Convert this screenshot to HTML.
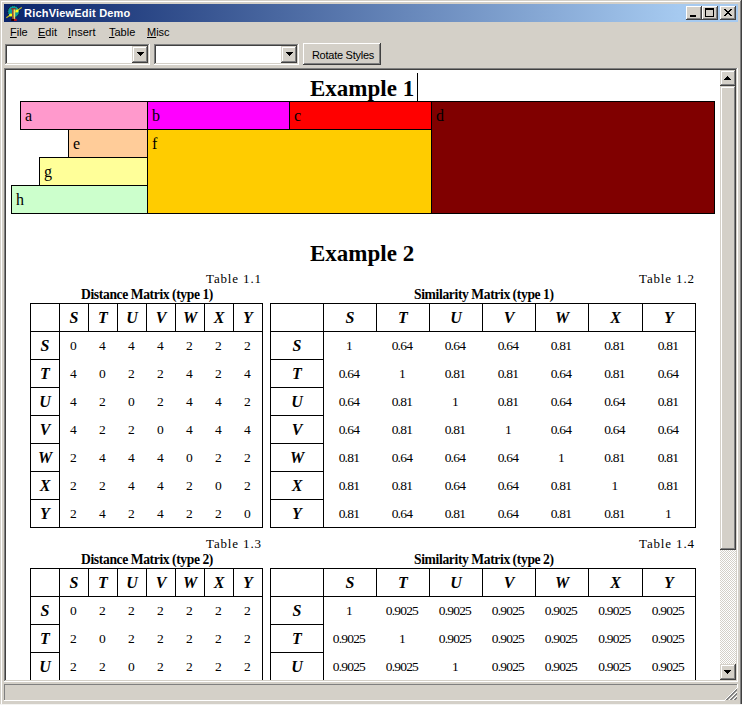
<!DOCTYPE html>
<html><head><meta charset="utf-8"><style>
html,body{margin:0;padding:0;}
body{width:742px;height:705px;position:relative;overflow:hidden;background:#d4d0c8;}
div{position:absolute;}
.t{white-space:nowrap;}
</style></head><body>
<div style="left:0px;top:0px;width:742px;height:1px;background:#d4d0c8"></div>
<div style="left:0px;top:0px;width:1px;height:705px;background:#d4d0c8"></div>
<div style="left:1px;top:1px;width:740px;height:1px;background:#ffffff"></div>
<div style="left:1px;top:1px;width:1px;height:703px;background:#ffffff"></div>
<div style="left:740px;top:1px;width:1px;height:703px;background:#808080"></div>
<div style="left:741px;top:0px;width:1px;height:704px;background:#404040"></div>
<div style="left:0px;top:704px;width:742px;height:1px;background:#f4f4f2"></div>
<div style="left:4px;top:4px;width:734px;height:18px;background:linear-gradient(to right,#0a246a 0%,#a6caf0 92%)"></div>
<div class="t" style="left:24px;top:6px;color:#fff;font:bold 11px/14px 'Liberation Sans',sans-serif;letter-spacing:0.2px">RichViewEdit Demo</div>
<svg style="position:absolute;left:6px;top:5px" width="16" height="16" viewBox="0 0 16 16">
<circle cx="7.6" cy="6.6" r="5.8" fill="#0c9c9c" stroke="#101010" stroke-width="0.9" stroke-dasharray="1.2 0.8"/>
<path d="M0.3 12.8 L15.8 2.4" stroke="#c8c028" stroke-width="1.15"/>
<circle cx="4.6" cy="9.9" r="1.5" fill="#ffff10"/>
<circle cx="11" cy="5.9" r="1.5" fill="#ffff10"/>
<rect x="6" y="4" width="1.7" height="10.5" fill="#9a4a30"/>
<rect x="7.7" y="4" width="1.5" height="10.5" fill="#f0e060"/>
<rect x="5.2" y="3.2" width="4.6" height="1.2" fill="#8a2a1a"/>
<rect x="5.2" y="13.9" width="2.8" height="2" fill="#200000"/>
<rect x="8" y="13.9" width="2.8" height="2" fill="#c01010"/>
</svg>
<div style="left:686px;top:6px;width:16px;height:14px;background:#404040"></div>
<div style="left:686px;top:6px;width:15px;height:13px;background:#ffffff"></div>
<div style="left:687px;top:7px;width:14px;height:12px;background:#808080"></div>
<div style="left:687px;top:7px;width:13px;height:11px;background:#d4d0c8"></div>
<div style="left:702px;top:6px;width:16px;height:14px;background:#404040"></div>
<div style="left:702px;top:6px;width:15px;height:13px;background:#ffffff"></div>
<div style="left:703px;top:7px;width:14px;height:12px;background:#808080"></div>
<div style="left:703px;top:7px;width:13px;height:11px;background:#d4d0c8"></div>
<div style="left:720px;top:6px;width:16px;height:14px;background:#404040"></div>
<div style="left:720px;top:6px;width:15px;height:13px;background:#ffffff"></div>
<div style="left:721px;top:7px;width:14px;height:12px;background:#808080"></div>
<div style="left:721px;top:7px;width:13px;height:11px;background:#d4d0c8"></div>
<div style="left:690px;top:15px;width:6px;height:2px;background:#000"></div>
<div style="left:705px;top:8px;width:9px;height:9px;background:#000"></div>
<div style="left:706px;top:10px;width:7px;height:6px;background:#d4d0c8"></div>
<svg style="position:absolute;left:724px;top:9px" width="8" height="7" shape-rendering="crispEdges">
<path d="M0 0h2v1h-2zM6 0h2v1h-2zM1 1h2v1h-2zM5 1h2v1h-2zM2 2h4v1h-4zM3 3h2v1h-2zM2 4h4v1h-4zM1 5h2v1h-2zM5 5h2v1h-2zM0 6h2v1h-2zM6 6h2v1h-2z" fill="#000"/>
</svg>
<div class="t" style="left:10px;top:26px;font:11px/13px 'Liberation Sans',sans-serif;color:#000"><u>F</u>ile</div>
<div class="t" style="left:38px;top:26px;font:11px/13px 'Liberation Sans',sans-serif;color:#000"><u>E</u>dit</div>
<div class="t" style="left:68px;top:26px;font:11px/13px 'Liberation Sans',sans-serif;color:#000"><u>I</u>nsert</div>
<div class="t" style="left:109px;top:26px;font:11px/13px 'Liberation Sans',sans-serif;color:#000"><u>T</u>able</div>
<div class="t" style="left:147px;top:26px;font:11px/13px 'Liberation Sans',sans-serif;color:#000"><u>M</u>isc</div>
<div style="left:5px;top:44px;width:145px;height:21px;background:#ffffff"></div>
<div style="left:5px;top:44px;width:144px;height:20px;background:#808080"></div>
<div style="left:6px;top:45px;width:143px;height:19px;background:#d4d0c8"></div>
<div style="left:6px;top:45px;width:142px;height:18px;background:#404040"></div>
<div style="left:7px;top:46px;width:141px;height:17px;background:#fff"></div>
<div style="left:132px;top:46px;width:16px;height:17px;background:#404040"></div>
<div style="left:132px;top:46px;width:15px;height:16px;background:#d4d0c8"></div>
<div style="left:133px;top:47px;width:14px;height:15px;background:#808080"></div>
<div style="left:133px;top:47px;width:13px;height:14px;background:#ffffff"></div>
<div style="left:134px;top:48px;width:12px;height:13px;background:#d4d0c8"></div>
<div style="left:137px;top:52px;width:7px;height:1px;background:#000"></div>
<div style="left:138px;top:53px;width:5px;height:1px;background:#000"></div>
<div style="left:139px;top:54px;width:3px;height:1px;background:#000"></div>
<div style="left:140px;top:55px;width:1px;height:1px;background:#000"></div>
<div style="left:154px;top:44px;width:145px;height:21px;background:#ffffff"></div>
<div style="left:154px;top:44px;width:144px;height:20px;background:#808080"></div>
<div style="left:155px;top:45px;width:143px;height:19px;background:#d4d0c8"></div>
<div style="left:155px;top:45px;width:142px;height:18px;background:#404040"></div>
<div style="left:156px;top:46px;width:141px;height:17px;background:#fff"></div>
<div style="left:281px;top:46px;width:16px;height:17px;background:#404040"></div>
<div style="left:281px;top:46px;width:15px;height:16px;background:#d4d0c8"></div>
<div style="left:282px;top:47px;width:14px;height:15px;background:#808080"></div>
<div style="left:282px;top:47px;width:13px;height:14px;background:#ffffff"></div>
<div style="left:283px;top:48px;width:12px;height:13px;background:#d4d0c8"></div>
<div style="left:286px;top:52px;width:7px;height:1px;background:#000"></div>
<div style="left:287px;top:53px;width:5px;height:1px;background:#000"></div>
<div style="left:288px;top:54px;width:3px;height:1px;background:#000"></div>
<div style="left:289px;top:55px;width:1px;height:1px;background:#000"></div>
<div style="left:303px;top:43px;width:78px;height:22px;background:#404040"></div>
<div style="left:303px;top:43px;width:77px;height:21px;background:#ffffff"></div>
<div style="left:304px;top:44px;width:76px;height:20px;background:#808080"></div>
<div style="left:304px;top:44px;width:75px;height:19px;background:#d4d0c8"></div>
<div class="t" style="left:304px;top:49px;width:78px;text-align:center;font:11px/13px 'Liberation Sans',sans-serif;letter-spacing:-0.25px;color:#000">Rotate Styles</div>
<div style="left:4px;top:68px;width:734px;height:614px;background:#ffffff"></div>
<div style="left:4px;top:68px;width:733px;height:613px;background:#808080"></div>
<div style="left:5px;top:69px;width:732px;height:612px;background:#d4d0c8"></div>
<div style="left:5px;top:69px;width:731px;height:611px;background:#404040"></div>
<div style="left:6px;top:70px;width:730px;height:610px;background:#fff"></div>
<svg style="position:absolute;left:720px;top:86px" width="16" height="578" shape-rendering="crispEdges"><defs><pattern id="chk" width="2" height="2" patternUnits="userSpaceOnUse"><rect width="2" height="2" fill="#fff"/><rect width="1" height="1" fill="#d4d0c8"/><rect x="1" y="1" width="1" height="1" fill="#d4d0c8"/></pattern></defs><rect width="16" height="578" fill="url(#chk)"/></svg>
<div style="left:720px;top:70px;width:16px;height:16px;background:#404040"></div>
<div style="left:720px;top:70px;width:15px;height:15px;background:#d4d0c8"></div>
<div style="left:721px;top:71px;width:14px;height:14px;background:#808080"></div>
<div style="left:721px;top:71px;width:13px;height:13px;background:#ffffff"></div>
<div style="left:722px;top:72px;width:12px;height:12px;background:#d4d0c8"></div>
<div style="left:727px;top:76px;width:1px;height:1px;background:#000"></div>
<div style="left:726px;top:77px;width:3px;height:1px;background:#000"></div>
<div style="left:725px;top:78px;width:5px;height:1px;background:#000"></div>
<div style="left:724px;top:79px;width:7px;height:1px;background:#000"></div>
<div style="left:720px;top:86px;width:16px;height:464px;background:#404040"></div>
<div style="left:720px;top:86px;width:15px;height:463px;background:#d4d0c8"></div>
<div style="left:721px;top:87px;width:14px;height:462px;background:#808080"></div>
<div style="left:721px;top:87px;width:13px;height:461px;background:#ffffff"></div>
<div style="left:722px;top:88px;width:12px;height:460px;background:#d4d0c8"></div>
<div style="left:720px;top:664px;width:16px;height:16px;background:#404040"></div>
<div style="left:720px;top:664px;width:15px;height:15px;background:#d4d0c8"></div>
<div style="left:721px;top:665px;width:14px;height:14px;background:#808080"></div>
<div style="left:721px;top:665px;width:13px;height:13px;background:#ffffff"></div>
<div style="left:722px;top:666px;width:12px;height:12px;background:#d4d0c8"></div>
<div style="left:724px;top:670px;width:7px;height:1px;background:#000"></div>
<div style="left:725px;top:671px;width:5px;height:1px;background:#000"></div>
<div style="left:726px;top:672px;width:3px;height:1px;background:#000"></div>
<div style="left:727px;top:673px;width:1px;height:1px;background:#000"></div>
<div style="left:0;top:0;width:742px;height:705px;clip-path:inset(69px 22px 25px 6px)"><div class="t" style="left:310px;top:76px;font:bold 23px/26px 'Liberation Serif',serif;color:#000">Example 1</div><div style="left:417px;top:73px;width:1px;height:28px;background:#000"></div><div style="left:20px;top:101px;width:128px;height:29px;background:#000"></div><div style="left:21px;top:102px;width:126px;height:27px;background:#ff99cc"></div><div class="t" style="left:25px;top:107px;font:16px/18px 'Liberation Serif',serif;color:#000">a</div><div style="left:147px;top:101px;width:143px;height:29px;background:#000"></div><div style="left:148px;top:102px;width:141px;height:27px;background:#ff00ff"></div><div class="t" style="left:152px;top:107px;font:16px/18px 'Liberation Serif',serif;color:#000">b</div><div style="left:289px;top:101px;width:143px;height:29px;background:#000"></div><div style="left:290px;top:102px;width:141px;height:27px;background:#ff0000"></div><div class="t" style="left:294px;top:107px;font:16px/18px 'Liberation Serif',serif;color:#000">c</div><div style="left:431px;top:101px;width:284px;height:113px;background:#000"></div><div style="left:432px;top:102px;width:282px;height:111px;background:#800000"></div><div class="t" style="left:436px;top:107px;font:16px/18px 'Liberation Serif',serif;color:#000">d</div><div style="left:68px;top:129px;width:80px;height:29px;background:#000"></div><div style="left:69px;top:130px;width:78px;height:27px;background:#ffcc99"></div><div class="t" style="left:73px;top:135px;font:16px/18px 'Liberation Serif',serif;color:#000">e</div><div style="left:147px;top:129px;width:285px;height:85px;background:#000"></div><div style="left:148px;top:130px;width:283px;height:83px;background:#ffcc00"></div><div class="t" style="left:152px;top:135px;font:16px/18px 'Liberation Serif',serif;color:#000">f</div><div style="left:39px;top:157px;width:109px;height:29px;background:#000"></div><div style="left:40px;top:158px;width:107px;height:27px;background:#ffff99"></div><div class="t" style="left:44px;top:163px;font:16px/18px 'Liberation Serif',serif;color:#000">g</div><div style="left:11px;top:185px;width:137px;height:29px;background:#000"></div><div style="left:12px;top:186px;width:135px;height:27px;background:#ccffcc"></div><div class="t" style="left:16px;top:191px;font:16px/18px 'Liberation Serif',serif;color:#000">h</div><div class="t" style="left:310px;top:241px;font:bold 23px/26px 'Liberation Serif',serif;color:#000">Example 2</div><div class="t" style="left:206px;top:271px;font:13px/15px 'Liberation Serif',serif;letter-spacing:0.85px;color:#000">Table 1.1</div><div class="t" style="left:81px;top:287px;font:bold 13.6px/15px 'Liberation Serif',serif;letter-spacing:-0.36px;word-spacing:-0.3px;color:#000">Distance Matrix (type 1)</div><div style="left:30px;top:303px;width:233px;height:1px;background:#000"></div><div style="left:30px;top:527px;width:233px;height:1px;background:#000"></div><div style="left:30px;top:303px;width:1px;height:225px;background:#000"></div><div style="left:262px;top:303px;width:1px;height:225px;background:#000"></div><div style="left:59px;top:303px;width:1px;height:225px;background:#000"></div><div style="left:30px;top:331px;width:233px;height:1px;background:#000"></div><div style="left:88px;top:303px;width:1px;height:28px;background:#000"></div><div style="left:117px;top:303px;width:1px;height:28px;background:#000"></div><div style="left:146px;top:303px;width:1px;height:28px;background:#000"></div><div style="left:175px;top:303px;width:1px;height:28px;background:#000"></div><div style="left:204px;top:303px;width:1px;height:28px;background:#000"></div><div style="left:233px;top:303px;width:1px;height:28px;background:#000"></div><div style="left:30px;top:359px;width:29px;height:1px;background:#000"></div><div style="left:30px;top:387px;width:29px;height:1px;background:#000"></div><div style="left:30px;top:415px;width:29px;height:1px;background:#000"></div><div style="left:30px;top:443px;width:29px;height:1px;background:#000"></div><div style="left:30px;top:471px;width:29px;height:1px;background:#000"></div><div style="left:30px;top:499px;width:29px;height:1px;background:#000"></div><div class="t" style="left:-26.0px;top:309px;width:200px;text-align:center;font:bold italic 16px/18px 'Liberation Serif',serif;color:#000">S</div><div class="t" style="left:-55.0px;top:337px;width:200px;text-align:center;font:bold italic 16px/18px 'Liberation Serif',serif;color:#000">S</div><div class="t" style="left:3.0px;top:309px;width:200px;text-align:center;font:bold italic 16px/18px 'Liberation Serif',serif;color:#000">T</div><div class="t" style="left:-55.0px;top:365px;width:200px;text-align:center;font:bold italic 16px/18px 'Liberation Serif',serif;color:#000">T</div><div class="t" style="left:32.0px;top:309px;width:200px;text-align:center;font:bold italic 16px/18px 'Liberation Serif',serif;color:#000">U</div><div class="t" style="left:-55.0px;top:393px;width:200px;text-align:center;font:bold italic 16px/18px 'Liberation Serif',serif;color:#000">U</div><div class="t" style="left:61.0px;top:309px;width:200px;text-align:center;font:bold italic 16px/18px 'Liberation Serif',serif;color:#000">V</div><div class="t" style="left:-55.0px;top:421px;width:200px;text-align:center;font:bold italic 16px/18px 'Liberation Serif',serif;color:#000">V</div><div class="t" style="left:90.0px;top:309px;width:200px;text-align:center;font:bold italic 16px/18px 'Liberation Serif',serif;color:#000">W</div><div class="t" style="left:-55.0px;top:449px;width:200px;text-align:center;font:bold italic 16px/18px 'Liberation Serif',serif;color:#000">W</div><div class="t" style="left:119.0px;top:309px;width:200px;text-align:center;font:bold italic 16px/18px 'Liberation Serif',serif;color:#000">X</div><div class="t" style="left:-55.0px;top:477px;width:200px;text-align:center;font:bold italic 16px/18px 'Liberation Serif',serif;color:#000">X</div><div class="t" style="left:148.0px;top:309px;width:200px;text-align:center;font:bold italic 16px/18px 'Liberation Serif',serif;color:#000">Y</div><div class="t" style="left:-55.0px;top:505px;width:200px;text-align:center;font:bold italic 16px/18px 'Liberation Serif',serif;color:#000">Y</div><div class="t" style="left:-27.099999999999994px;top:338px;width:200px;text-align:center;font:13.5px/15px 'Liberation Serif',serif;letter-spacing:-0.8px;color:#000">0</div><div class="t" style="left:1.9000000000000057px;top:338px;width:200px;text-align:center;font:13.5px/15px 'Liberation Serif',serif;letter-spacing:-0.8px;color:#000">4</div><div class="t" style="left:30.900000000000006px;top:338px;width:200px;text-align:center;font:13.5px/15px 'Liberation Serif',serif;letter-spacing:-0.8px;color:#000">4</div><div class="t" style="left:59.900000000000006px;top:338px;width:200px;text-align:center;font:13.5px/15px 'Liberation Serif',serif;letter-spacing:-0.8px;color:#000">4</div><div class="t" style="left:88.9px;top:338px;width:200px;text-align:center;font:13.5px/15px 'Liberation Serif',serif;letter-spacing:-0.8px;color:#000">2</div><div class="t" style="left:117.9px;top:338px;width:200px;text-align:center;font:13.5px/15px 'Liberation Serif',serif;letter-spacing:-0.8px;color:#000">2</div><div class="t" style="left:146.9px;top:338px;width:200px;text-align:center;font:13.5px/15px 'Liberation Serif',serif;letter-spacing:-0.8px;color:#000">2</div><div class="t" style="left:-27.099999999999994px;top:366px;width:200px;text-align:center;font:13.5px/15px 'Liberation Serif',serif;letter-spacing:-0.8px;color:#000">4</div><div class="t" style="left:1.9000000000000057px;top:366px;width:200px;text-align:center;font:13.5px/15px 'Liberation Serif',serif;letter-spacing:-0.8px;color:#000">0</div><div class="t" style="left:30.900000000000006px;top:366px;width:200px;text-align:center;font:13.5px/15px 'Liberation Serif',serif;letter-spacing:-0.8px;color:#000">2</div><div class="t" style="left:59.900000000000006px;top:366px;width:200px;text-align:center;font:13.5px/15px 'Liberation Serif',serif;letter-spacing:-0.8px;color:#000">2</div><div class="t" style="left:88.9px;top:366px;width:200px;text-align:center;font:13.5px/15px 'Liberation Serif',serif;letter-spacing:-0.8px;color:#000">4</div><div class="t" style="left:117.9px;top:366px;width:200px;text-align:center;font:13.5px/15px 'Liberation Serif',serif;letter-spacing:-0.8px;color:#000">2</div><div class="t" style="left:146.9px;top:366px;width:200px;text-align:center;font:13.5px/15px 'Liberation Serif',serif;letter-spacing:-0.8px;color:#000">4</div><div class="t" style="left:-27.099999999999994px;top:394px;width:200px;text-align:center;font:13.5px/15px 'Liberation Serif',serif;letter-spacing:-0.8px;color:#000">4</div><div class="t" style="left:1.9000000000000057px;top:394px;width:200px;text-align:center;font:13.5px/15px 'Liberation Serif',serif;letter-spacing:-0.8px;color:#000">2</div><div class="t" style="left:30.900000000000006px;top:394px;width:200px;text-align:center;font:13.5px/15px 'Liberation Serif',serif;letter-spacing:-0.8px;color:#000">0</div><div class="t" style="left:59.900000000000006px;top:394px;width:200px;text-align:center;font:13.5px/15px 'Liberation Serif',serif;letter-spacing:-0.8px;color:#000">2</div><div class="t" style="left:88.9px;top:394px;width:200px;text-align:center;font:13.5px/15px 'Liberation Serif',serif;letter-spacing:-0.8px;color:#000">4</div><div class="t" style="left:117.9px;top:394px;width:200px;text-align:center;font:13.5px/15px 'Liberation Serif',serif;letter-spacing:-0.8px;color:#000">4</div><div class="t" style="left:146.9px;top:394px;width:200px;text-align:center;font:13.5px/15px 'Liberation Serif',serif;letter-spacing:-0.8px;color:#000">2</div><div class="t" style="left:-27.099999999999994px;top:422px;width:200px;text-align:center;font:13.5px/15px 'Liberation Serif',serif;letter-spacing:-0.8px;color:#000">4</div><div class="t" style="left:1.9000000000000057px;top:422px;width:200px;text-align:center;font:13.5px/15px 'Liberation Serif',serif;letter-spacing:-0.8px;color:#000">2</div><div class="t" style="left:30.900000000000006px;top:422px;width:200px;text-align:center;font:13.5px/15px 'Liberation Serif',serif;letter-spacing:-0.8px;color:#000">2</div><div class="t" style="left:59.900000000000006px;top:422px;width:200px;text-align:center;font:13.5px/15px 'Liberation Serif',serif;letter-spacing:-0.8px;color:#000">0</div><div class="t" style="left:88.9px;top:422px;width:200px;text-align:center;font:13.5px/15px 'Liberation Serif',serif;letter-spacing:-0.8px;color:#000">4</div><div class="t" style="left:117.9px;top:422px;width:200px;text-align:center;font:13.5px/15px 'Liberation Serif',serif;letter-spacing:-0.8px;color:#000">4</div><div class="t" style="left:146.9px;top:422px;width:200px;text-align:center;font:13.5px/15px 'Liberation Serif',serif;letter-spacing:-0.8px;color:#000">4</div><div class="t" style="left:-27.099999999999994px;top:450px;width:200px;text-align:center;font:13.5px/15px 'Liberation Serif',serif;letter-spacing:-0.8px;color:#000">2</div><div class="t" style="left:1.9000000000000057px;top:450px;width:200px;text-align:center;font:13.5px/15px 'Liberation Serif',serif;letter-spacing:-0.8px;color:#000">4</div><div class="t" style="left:30.900000000000006px;top:450px;width:200px;text-align:center;font:13.5px/15px 'Liberation Serif',serif;letter-spacing:-0.8px;color:#000">4</div><div class="t" style="left:59.900000000000006px;top:450px;width:200px;text-align:center;font:13.5px/15px 'Liberation Serif',serif;letter-spacing:-0.8px;color:#000">4</div><div class="t" style="left:88.9px;top:450px;width:200px;text-align:center;font:13.5px/15px 'Liberation Serif',serif;letter-spacing:-0.8px;color:#000">0</div><div class="t" style="left:117.9px;top:450px;width:200px;text-align:center;font:13.5px/15px 'Liberation Serif',serif;letter-spacing:-0.8px;color:#000">2</div><div class="t" style="left:146.9px;top:450px;width:200px;text-align:center;font:13.5px/15px 'Liberation Serif',serif;letter-spacing:-0.8px;color:#000">2</div><div class="t" style="left:-27.099999999999994px;top:478px;width:200px;text-align:center;font:13.5px/15px 'Liberation Serif',serif;letter-spacing:-0.8px;color:#000">2</div><div class="t" style="left:1.9000000000000057px;top:478px;width:200px;text-align:center;font:13.5px/15px 'Liberation Serif',serif;letter-spacing:-0.8px;color:#000">2</div><div class="t" style="left:30.900000000000006px;top:478px;width:200px;text-align:center;font:13.5px/15px 'Liberation Serif',serif;letter-spacing:-0.8px;color:#000">4</div><div class="t" style="left:59.900000000000006px;top:478px;width:200px;text-align:center;font:13.5px/15px 'Liberation Serif',serif;letter-spacing:-0.8px;color:#000">4</div><div class="t" style="left:88.9px;top:478px;width:200px;text-align:center;font:13.5px/15px 'Liberation Serif',serif;letter-spacing:-0.8px;color:#000">2</div><div class="t" style="left:117.9px;top:478px;width:200px;text-align:center;font:13.5px/15px 'Liberation Serif',serif;letter-spacing:-0.8px;color:#000">0</div><div class="t" style="left:146.9px;top:478px;width:200px;text-align:center;font:13.5px/15px 'Liberation Serif',serif;letter-spacing:-0.8px;color:#000">2</div><div class="t" style="left:-27.099999999999994px;top:506px;width:200px;text-align:center;font:13.5px/15px 'Liberation Serif',serif;letter-spacing:-0.8px;color:#000">2</div><div class="t" style="left:1.9000000000000057px;top:506px;width:200px;text-align:center;font:13.5px/15px 'Liberation Serif',serif;letter-spacing:-0.8px;color:#000">4</div><div class="t" style="left:30.900000000000006px;top:506px;width:200px;text-align:center;font:13.5px/15px 'Liberation Serif',serif;letter-spacing:-0.8px;color:#000">2</div><div class="t" style="left:59.900000000000006px;top:506px;width:200px;text-align:center;font:13.5px/15px 'Liberation Serif',serif;letter-spacing:-0.8px;color:#000">4</div><div class="t" style="left:88.9px;top:506px;width:200px;text-align:center;font:13.5px/15px 'Liberation Serif',serif;letter-spacing:-0.8px;color:#000">2</div><div class="t" style="left:117.9px;top:506px;width:200px;text-align:center;font:13.5px/15px 'Liberation Serif',serif;letter-spacing:-0.8px;color:#000">2</div><div class="t" style="left:146.9px;top:506px;width:200px;text-align:center;font:13.5px/15px 'Liberation Serif',serif;letter-spacing:-0.8px;color:#000">0</div><div class="t" style="left:639px;top:271px;font:13px/15px 'Liberation Serif',serif;letter-spacing:0.85px;color:#000">Table 1.2</div><div class="t" style="left:414px;top:287px;font:bold 13.6px/15px 'Liberation Serif',serif;letter-spacing:-0.36px;word-spacing:-0.3px;color:#000">Similarity Matrix (type 1)</div><div style="left:270px;top:303px;width:426px;height:1px;background:#000"></div><div style="left:270px;top:527px;width:426px;height:1px;background:#000"></div><div style="left:270px;top:303px;width:1px;height:225px;background:#000"></div><div style="left:695px;top:303px;width:1px;height:225px;background:#000"></div><div style="left:323px;top:303px;width:1px;height:225px;background:#000"></div><div style="left:270px;top:331px;width:426px;height:1px;background:#000"></div><div style="left:376px;top:303px;width:1px;height:28px;background:#000"></div><div style="left:429px;top:303px;width:1px;height:28px;background:#000"></div><div style="left:482px;top:303px;width:1px;height:28px;background:#000"></div><div style="left:535px;top:303px;width:1px;height:28px;background:#000"></div><div style="left:588px;top:303px;width:1px;height:28px;background:#000"></div><div style="left:642px;top:303px;width:1px;height:28px;background:#000"></div><div style="left:270px;top:359px;width:53px;height:1px;background:#000"></div><div style="left:270px;top:387px;width:53px;height:1px;background:#000"></div><div style="left:270px;top:415px;width:53px;height:1px;background:#000"></div><div style="left:270px;top:443px;width:53px;height:1px;background:#000"></div><div style="left:270px;top:471px;width:53px;height:1px;background:#000"></div><div style="left:270px;top:499px;width:53px;height:1px;background:#000"></div><div class="t" style="left:250.0px;top:309px;width:200px;text-align:center;font:bold italic 16px/18px 'Liberation Serif',serif;color:#000">S</div><div class="t" style="left:197.0px;top:337px;width:200px;text-align:center;font:bold italic 16px/18px 'Liberation Serif',serif;color:#000">S</div><div class="t" style="left:303.0px;top:309px;width:200px;text-align:center;font:bold italic 16px/18px 'Liberation Serif',serif;color:#000">T</div><div class="t" style="left:197.0px;top:365px;width:200px;text-align:center;font:bold italic 16px/18px 'Liberation Serif',serif;color:#000">T</div><div class="t" style="left:356.0px;top:309px;width:200px;text-align:center;font:bold italic 16px/18px 'Liberation Serif',serif;color:#000">U</div><div class="t" style="left:197.0px;top:393px;width:200px;text-align:center;font:bold italic 16px/18px 'Liberation Serif',serif;color:#000">U</div><div class="t" style="left:409.0px;top:309px;width:200px;text-align:center;font:bold italic 16px/18px 'Liberation Serif',serif;color:#000">V</div><div class="t" style="left:197.0px;top:421px;width:200px;text-align:center;font:bold italic 16px/18px 'Liberation Serif',serif;color:#000">V</div><div class="t" style="left:462.0px;top:309px;width:200px;text-align:center;font:bold italic 16px/18px 'Liberation Serif',serif;color:#000">W</div><div class="t" style="left:197.0px;top:449px;width:200px;text-align:center;font:bold italic 16px/18px 'Liberation Serif',serif;color:#000">W</div><div class="t" style="left:515.5px;top:309px;width:200px;text-align:center;font:bold italic 16px/18px 'Liberation Serif',serif;color:#000">X</div><div class="t" style="left:197.0px;top:477px;width:200px;text-align:center;font:bold italic 16px/18px 'Liberation Serif',serif;color:#000">X</div><div class="t" style="left:569.0px;top:309px;width:200px;text-align:center;font:bold italic 16px/18px 'Liberation Serif',serif;color:#000">Y</div><div class="t" style="left:197.0px;top:505px;width:200px;text-align:center;font:bold italic 16px/18px 'Liberation Serif',serif;color:#000">Y</div><div class="t" style="left:248.89999999999998px;top:338px;width:200px;text-align:center;font:13.5px/15px 'Liberation Serif',serif;letter-spacing:-0.8px;color:#000">1</div><div class="t" style="left:301.9px;top:338px;width:200px;text-align:center;font:13.5px/15px 'Liberation Serif',serif;letter-spacing:-0.8px;color:#000">0.64</div><div class="t" style="left:354.9px;top:338px;width:200px;text-align:center;font:13.5px/15px 'Liberation Serif',serif;letter-spacing:-0.8px;color:#000">0.64</div><div class="t" style="left:407.9px;top:338px;width:200px;text-align:center;font:13.5px/15px 'Liberation Serif',serif;letter-spacing:-0.8px;color:#000">0.64</div><div class="t" style="left:460.9px;top:338px;width:200px;text-align:center;font:13.5px/15px 'Liberation Serif',serif;letter-spacing:-0.8px;color:#000">0.81</div><div class="t" style="left:514.4px;top:338px;width:200px;text-align:center;font:13.5px/15px 'Liberation Serif',serif;letter-spacing:-0.8px;color:#000">0.81</div><div class="t" style="left:567.9px;top:338px;width:200px;text-align:center;font:13.5px/15px 'Liberation Serif',serif;letter-spacing:-0.8px;color:#000">0.81</div><div class="t" style="left:248.89999999999998px;top:366px;width:200px;text-align:center;font:13.5px/15px 'Liberation Serif',serif;letter-spacing:-0.8px;color:#000">0.64</div><div class="t" style="left:301.9px;top:366px;width:200px;text-align:center;font:13.5px/15px 'Liberation Serif',serif;letter-spacing:-0.8px;color:#000">1</div><div class="t" style="left:354.9px;top:366px;width:200px;text-align:center;font:13.5px/15px 'Liberation Serif',serif;letter-spacing:-0.8px;color:#000">0.81</div><div class="t" style="left:407.9px;top:366px;width:200px;text-align:center;font:13.5px/15px 'Liberation Serif',serif;letter-spacing:-0.8px;color:#000">0.81</div><div class="t" style="left:460.9px;top:366px;width:200px;text-align:center;font:13.5px/15px 'Liberation Serif',serif;letter-spacing:-0.8px;color:#000">0.64</div><div class="t" style="left:514.4px;top:366px;width:200px;text-align:center;font:13.5px/15px 'Liberation Serif',serif;letter-spacing:-0.8px;color:#000">0.81</div><div class="t" style="left:567.9px;top:366px;width:200px;text-align:center;font:13.5px/15px 'Liberation Serif',serif;letter-spacing:-0.8px;color:#000">0.64</div><div class="t" style="left:248.89999999999998px;top:394px;width:200px;text-align:center;font:13.5px/15px 'Liberation Serif',serif;letter-spacing:-0.8px;color:#000">0.64</div><div class="t" style="left:301.9px;top:394px;width:200px;text-align:center;font:13.5px/15px 'Liberation Serif',serif;letter-spacing:-0.8px;color:#000">0.81</div><div class="t" style="left:354.9px;top:394px;width:200px;text-align:center;font:13.5px/15px 'Liberation Serif',serif;letter-spacing:-0.8px;color:#000">1</div><div class="t" style="left:407.9px;top:394px;width:200px;text-align:center;font:13.5px/15px 'Liberation Serif',serif;letter-spacing:-0.8px;color:#000">0.81</div><div class="t" style="left:460.9px;top:394px;width:200px;text-align:center;font:13.5px/15px 'Liberation Serif',serif;letter-spacing:-0.8px;color:#000">0.64</div><div class="t" style="left:514.4px;top:394px;width:200px;text-align:center;font:13.5px/15px 'Liberation Serif',serif;letter-spacing:-0.8px;color:#000">0.64</div><div class="t" style="left:567.9px;top:394px;width:200px;text-align:center;font:13.5px/15px 'Liberation Serif',serif;letter-spacing:-0.8px;color:#000">0.81</div><div class="t" style="left:248.89999999999998px;top:422px;width:200px;text-align:center;font:13.5px/15px 'Liberation Serif',serif;letter-spacing:-0.8px;color:#000">0.64</div><div class="t" style="left:301.9px;top:422px;width:200px;text-align:center;font:13.5px/15px 'Liberation Serif',serif;letter-spacing:-0.8px;color:#000">0.81</div><div class="t" style="left:354.9px;top:422px;width:200px;text-align:center;font:13.5px/15px 'Liberation Serif',serif;letter-spacing:-0.8px;color:#000">0.81</div><div class="t" style="left:407.9px;top:422px;width:200px;text-align:center;font:13.5px/15px 'Liberation Serif',serif;letter-spacing:-0.8px;color:#000">1</div><div class="t" style="left:460.9px;top:422px;width:200px;text-align:center;font:13.5px/15px 'Liberation Serif',serif;letter-spacing:-0.8px;color:#000">0.64</div><div class="t" style="left:514.4px;top:422px;width:200px;text-align:center;font:13.5px/15px 'Liberation Serif',serif;letter-spacing:-0.8px;color:#000">0.64</div><div class="t" style="left:567.9px;top:422px;width:200px;text-align:center;font:13.5px/15px 'Liberation Serif',serif;letter-spacing:-0.8px;color:#000">0.64</div><div class="t" style="left:248.89999999999998px;top:450px;width:200px;text-align:center;font:13.5px/15px 'Liberation Serif',serif;letter-spacing:-0.8px;color:#000">0.81</div><div class="t" style="left:301.9px;top:450px;width:200px;text-align:center;font:13.5px/15px 'Liberation Serif',serif;letter-spacing:-0.8px;color:#000">0.64</div><div class="t" style="left:354.9px;top:450px;width:200px;text-align:center;font:13.5px/15px 'Liberation Serif',serif;letter-spacing:-0.8px;color:#000">0.64</div><div class="t" style="left:407.9px;top:450px;width:200px;text-align:center;font:13.5px/15px 'Liberation Serif',serif;letter-spacing:-0.8px;color:#000">0.64</div><div class="t" style="left:460.9px;top:450px;width:200px;text-align:center;font:13.5px/15px 'Liberation Serif',serif;letter-spacing:-0.8px;color:#000">1</div><div class="t" style="left:514.4px;top:450px;width:200px;text-align:center;font:13.5px/15px 'Liberation Serif',serif;letter-spacing:-0.8px;color:#000">0.81</div><div class="t" style="left:567.9px;top:450px;width:200px;text-align:center;font:13.5px/15px 'Liberation Serif',serif;letter-spacing:-0.8px;color:#000">0.81</div><div class="t" style="left:248.89999999999998px;top:478px;width:200px;text-align:center;font:13.5px/15px 'Liberation Serif',serif;letter-spacing:-0.8px;color:#000">0.81</div><div class="t" style="left:301.9px;top:478px;width:200px;text-align:center;font:13.5px/15px 'Liberation Serif',serif;letter-spacing:-0.8px;color:#000">0.81</div><div class="t" style="left:354.9px;top:478px;width:200px;text-align:center;font:13.5px/15px 'Liberation Serif',serif;letter-spacing:-0.8px;color:#000">0.64</div><div class="t" style="left:407.9px;top:478px;width:200px;text-align:center;font:13.5px/15px 'Liberation Serif',serif;letter-spacing:-0.8px;color:#000">0.64</div><div class="t" style="left:460.9px;top:478px;width:200px;text-align:center;font:13.5px/15px 'Liberation Serif',serif;letter-spacing:-0.8px;color:#000">0.81</div><div class="t" style="left:514.4px;top:478px;width:200px;text-align:center;font:13.5px/15px 'Liberation Serif',serif;letter-spacing:-0.8px;color:#000">1</div><div class="t" style="left:567.9px;top:478px;width:200px;text-align:center;font:13.5px/15px 'Liberation Serif',serif;letter-spacing:-0.8px;color:#000">0.81</div><div class="t" style="left:248.89999999999998px;top:506px;width:200px;text-align:center;font:13.5px/15px 'Liberation Serif',serif;letter-spacing:-0.8px;color:#000">0.81</div><div class="t" style="left:301.9px;top:506px;width:200px;text-align:center;font:13.5px/15px 'Liberation Serif',serif;letter-spacing:-0.8px;color:#000">0.64</div><div class="t" style="left:354.9px;top:506px;width:200px;text-align:center;font:13.5px/15px 'Liberation Serif',serif;letter-spacing:-0.8px;color:#000">0.81</div><div class="t" style="left:407.9px;top:506px;width:200px;text-align:center;font:13.5px/15px 'Liberation Serif',serif;letter-spacing:-0.8px;color:#000">0.64</div><div class="t" style="left:460.9px;top:506px;width:200px;text-align:center;font:13.5px/15px 'Liberation Serif',serif;letter-spacing:-0.8px;color:#000">0.81</div><div class="t" style="left:514.4px;top:506px;width:200px;text-align:center;font:13.5px/15px 'Liberation Serif',serif;letter-spacing:-0.8px;color:#000">0.81</div><div class="t" style="left:567.9px;top:506px;width:200px;text-align:center;font:13.5px/15px 'Liberation Serif',serif;letter-spacing:-0.8px;color:#000">1</div><div class="t" style="left:206px;top:536px;font:13px/15px 'Liberation Serif',serif;letter-spacing:0.85px;color:#000">Table 1.3</div><div class="t" style="left:81px;top:552px;font:bold 13.6px/15px 'Liberation Serif',serif;letter-spacing:-0.36px;word-spacing:-0.3px;color:#000">Distance Matrix (type 2)</div><div style="left:30px;top:568px;width:233px;height:1px;background:#000"></div><div style="left:30px;top:792px;width:233px;height:1px;background:#000"></div><div style="left:30px;top:568px;width:1px;height:225px;background:#000"></div><div style="left:262px;top:568px;width:1px;height:225px;background:#000"></div><div style="left:59px;top:568px;width:1px;height:225px;background:#000"></div><div style="left:30px;top:596px;width:233px;height:1px;background:#000"></div><div style="left:88px;top:568px;width:1px;height:28px;background:#000"></div><div style="left:117px;top:568px;width:1px;height:28px;background:#000"></div><div style="left:146px;top:568px;width:1px;height:28px;background:#000"></div><div style="left:175px;top:568px;width:1px;height:28px;background:#000"></div><div style="left:204px;top:568px;width:1px;height:28px;background:#000"></div><div style="left:233px;top:568px;width:1px;height:28px;background:#000"></div><div style="left:30px;top:624px;width:29px;height:1px;background:#000"></div><div style="left:30px;top:652px;width:29px;height:1px;background:#000"></div><div style="left:30px;top:680px;width:29px;height:1px;background:#000"></div><div style="left:30px;top:708px;width:29px;height:1px;background:#000"></div><div style="left:30px;top:736px;width:29px;height:1px;background:#000"></div><div style="left:30px;top:764px;width:29px;height:1px;background:#000"></div><div class="t" style="left:-26.0px;top:574px;width:200px;text-align:center;font:bold italic 16px/18px 'Liberation Serif',serif;color:#000">S</div><div class="t" style="left:-55.0px;top:602px;width:200px;text-align:center;font:bold italic 16px/18px 'Liberation Serif',serif;color:#000">S</div><div class="t" style="left:3.0px;top:574px;width:200px;text-align:center;font:bold italic 16px/18px 'Liberation Serif',serif;color:#000">T</div><div class="t" style="left:-55.0px;top:630px;width:200px;text-align:center;font:bold italic 16px/18px 'Liberation Serif',serif;color:#000">T</div><div class="t" style="left:32.0px;top:574px;width:200px;text-align:center;font:bold italic 16px/18px 'Liberation Serif',serif;color:#000">U</div><div class="t" style="left:-55.0px;top:658px;width:200px;text-align:center;font:bold italic 16px/18px 'Liberation Serif',serif;color:#000">U</div><div class="t" style="left:61.0px;top:574px;width:200px;text-align:center;font:bold italic 16px/18px 'Liberation Serif',serif;color:#000">V</div><div class="t" style="left:-55.0px;top:686px;width:200px;text-align:center;font:bold italic 16px/18px 'Liberation Serif',serif;color:#000">V</div><div class="t" style="left:90.0px;top:574px;width:200px;text-align:center;font:bold italic 16px/18px 'Liberation Serif',serif;color:#000">W</div><div class="t" style="left:-55.0px;top:714px;width:200px;text-align:center;font:bold italic 16px/18px 'Liberation Serif',serif;color:#000">W</div><div class="t" style="left:119.0px;top:574px;width:200px;text-align:center;font:bold italic 16px/18px 'Liberation Serif',serif;color:#000">X</div><div class="t" style="left:-55.0px;top:742px;width:200px;text-align:center;font:bold italic 16px/18px 'Liberation Serif',serif;color:#000">X</div><div class="t" style="left:148.0px;top:574px;width:200px;text-align:center;font:bold italic 16px/18px 'Liberation Serif',serif;color:#000">Y</div><div class="t" style="left:-55.0px;top:770px;width:200px;text-align:center;font:bold italic 16px/18px 'Liberation Serif',serif;color:#000">Y</div><div class="t" style="left:-27.099999999999994px;top:603px;width:200px;text-align:center;font:13.5px/15px 'Liberation Serif',serif;letter-spacing:-0.8px;color:#000">0</div><div class="t" style="left:1.9000000000000057px;top:603px;width:200px;text-align:center;font:13.5px/15px 'Liberation Serif',serif;letter-spacing:-0.8px;color:#000">2</div><div class="t" style="left:30.900000000000006px;top:603px;width:200px;text-align:center;font:13.5px/15px 'Liberation Serif',serif;letter-spacing:-0.8px;color:#000">2</div><div class="t" style="left:59.900000000000006px;top:603px;width:200px;text-align:center;font:13.5px/15px 'Liberation Serif',serif;letter-spacing:-0.8px;color:#000">2</div><div class="t" style="left:88.9px;top:603px;width:200px;text-align:center;font:13.5px/15px 'Liberation Serif',serif;letter-spacing:-0.8px;color:#000">2</div><div class="t" style="left:117.9px;top:603px;width:200px;text-align:center;font:13.5px/15px 'Liberation Serif',serif;letter-spacing:-0.8px;color:#000">2</div><div class="t" style="left:146.9px;top:603px;width:200px;text-align:center;font:13.5px/15px 'Liberation Serif',serif;letter-spacing:-0.8px;color:#000">2</div><div class="t" style="left:-27.099999999999994px;top:631px;width:200px;text-align:center;font:13.5px/15px 'Liberation Serif',serif;letter-spacing:-0.8px;color:#000">2</div><div class="t" style="left:1.9000000000000057px;top:631px;width:200px;text-align:center;font:13.5px/15px 'Liberation Serif',serif;letter-spacing:-0.8px;color:#000">0</div><div class="t" style="left:30.900000000000006px;top:631px;width:200px;text-align:center;font:13.5px/15px 'Liberation Serif',serif;letter-spacing:-0.8px;color:#000">2</div><div class="t" style="left:59.900000000000006px;top:631px;width:200px;text-align:center;font:13.5px/15px 'Liberation Serif',serif;letter-spacing:-0.8px;color:#000">2</div><div class="t" style="left:88.9px;top:631px;width:200px;text-align:center;font:13.5px/15px 'Liberation Serif',serif;letter-spacing:-0.8px;color:#000">2</div><div class="t" style="left:117.9px;top:631px;width:200px;text-align:center;font:13.5px/15px 'Liberation Serif',serif;letter-spacing:-0.8px;color:#000">2</div><div class="t" style="left:146.9px;top:631px;width:200px;text-align:center;font:13.5px/15px 'Liberation Serif',serif;letter-spacing:-0.8px;color:#000">2</div><div class="t" style="left:-27.099999999999994px;top:659px;width:200px;text-align:center;font:13.5px/15px 'Liberation Serif',serif;letter-spacing:-0.8px;color:#000">2</div><div class="t" style="left:1.9000000000000057px;top:659px;width:200px;text-align:center;font:13.5px/15px 'Liberation Serif',serif;letter-spacing:-0.8px;color:#000">2</div><div class="t" style="left:30.900000000000006px;top:659px;width:200px;text-align:center;font:13.5px/15px 'Liberation Serif',serif;letter-spacing:-0.8px;color:#000">0</div><div class="t" style="left:59.900000000000006px;top:659px;width:200px;text-align:center;font:13.5px/15px 'Liberation Serif',serif;letter-spacing:-0.8px;color:#000">2</div><div class="t" style="left:88.9px;top:659px;width:200px;text-align:center;font:13.5px/15px 'Liberation Serif',serif;letter-spacing:-0.8px;color:#000">2</div><div class="t" style="left:117.9px;top:659px;width:200px;text-align:center;font:13.5px/15px 'Liberation Serif',serif;letter-spacing:-0.8px;color:#000">2</div><div class="t" style="left:146.9px;top:659px;width:200px;text-align:center;font:13.5px/15px 'Liberation Serif',serif;letter-spacing:-0.8px;color:#000">2</div><div class="t" style="left:-27.099999999999994px;top:687px;width:200px;text-align:center;font:13.5px/15px 'Liberation Serif',serif;letter-spacing:-0.8px;color:#000">2</div><div class="t" style="left:1.9000000000000057px;top:687px;width:200px;text-align:center;font:13.5px/15px 'Liberation Serif',serif;letter-spacing:-0.8px;color:#000">2</div><div class="t" style="left:30.900000000000006px;top:687px;width:200px;text-align:center;font:13.5px/15px 'Liberation Serif',serif;letter-spacing:-0.8px;color:#000">2</div><div class="t" style="left:59.900000000000006px;top:687px;width:200px;text-align:center;font:13.5px/15px 'Liberation Serif',serif;letter-spacing:-0.8px;color:#000">0</div><div class="t" style="left:88.9px;top:687px;width:200px;text-align:center;font:13.5px/15px 'Liberation Serif',serif;letter-spacing:-0.8px;color:#000">2</div><div class="t" style="left:117.9px;top:687px;width:200px;text-align:center;font:13.5px/15px 'Liberation Serif',serif;letter-spacing:-0.8px;color:#000">2</div><div class="t" style="left:146.9px;top:687px;width:200px;text-align:center;font:13.5px/15px 'Liberation Serif',serif;letter-spacing:-0.8px;color:#000">2</div><div class="t" style="left:-27.099999999999994px;top:715px;width:200px;text-align:center;font:13.5px/15px 'Liberation Serif',serif;letter-spacing:-0.8px;color:#000">2</div><div class="t" style="left:1.9000000000000057px;top:715px;width:200px;text-align:center;font:13.5px/15px 'Liberation Serif',serif;letter-spacing:-0.8px;color:#000">2</div><div class="t" style="left:30.900000000000006px;top:715px;width:200px;text-align:center;font:13.5px/15px 'Liberation Serif',serif;letter-spacing:-0.8px;color:#000">2</div><div class="t" style="left:59.900000000000006px;top:715px;width:200px;text-align:center;font:13.5px/15px 'Liberation Serif',serif;letter-spacing:-0.8px;color:#000">2</div><div class="t" style="left:88.9px;top:715px;width:200px;text-align:center;font:13.5px/15px 'Liberation Serif',serif;letter-spacing:-0.8px;color:#000">0</div><div class="t" style="left:117.9px;top:715px;width:200px;text-align:center;font:13.5px/15px 'Liberation Serif',serif;letter-spacing:-0.8px;color:#000">2</div><div class="t" style="left:146.9px;top:715px;width:200px;text-align:center;font:13.5px/15px 'Liberation Serif',serif;letter-spacing:-0.8px;color:#000">2</div><div class="t" style="left:-27.099999999999994px;top:743px;width:200px;text-align:center;font:13.5px/15px 'Liberation Serif',serif;letter-spacing:-0.8px;color:#000">2</div><div class="t" style="left:1.9000000000000057px;top:743px;width:200px;text-align:center;font:13.5px/15px 'Liberation Serif',serif;letter-spacing:-0.8px;color:#000">2</div><div class="t" style="left:30.900000000000006px;top:743px;width:200px;text-align:center;font:13.5px/15px 'Liberation Serif',serif;letter-spacing:-0.8px;color:#000">2</div><div class="t" style="left:59.900000000000006px;top:743px;width:200px;text-align:center;font:13.5px/15px 'Liberation Serif',serif;letter-spacing:-0.8px;color:#000">2</div><div class="t" style="left:88.9px;top:743px;width:200px;text-align:center;font:13.5px/15px 'Liberation Serif',serif;letter-spacing:-0.8px;color:#000">2</div><div class="t" style="left:117.9px;top:743px;width:200px;text-align:center;font:13.5px/15px 'Liberation Serif',serif;letter-spacing:-0.8px;color:#000">0</div><div class="t" style="left:146.9px;top:743px;width:200px;text-align:center;font:13.5px/15px 'Liberation Serif',serif;letter-spacing:-0.8px;color:#000">2</div><div class="t" style="left:-27.099999999999994px;top:771px;width:200px;text-align:center;font:13.5px/15px 'Liberation Serif',serif;letter-spacing:-0.8px;color:#000">2</div><div class="t" style="left:1.9000000000000057px;top:771px;width:200px;text-align:center;font:13.5px/15px 'Liberation Serif',serif;letter-spacing:-0.8px;color:#000">2</div><div class="t" style="left:30.900000000000006px;top:771px;width:200px;text-align:center;font:13.5px/15px 'Liberation Serif',serif;letter-spacing:-0.8px;color:#000">2</div><div class="t" style="left:59.900000000000006px;top:771px;width:200px;text-align:center;font:13.5px/15px 'Liberation Serif',serif;letter-spacing:-0.8px;color:#000">2</div><div class="t" style="left:88.9px;top:771px;width:200px;text-align:center;font:13.5px/15px 'Liberation Serif',serif;letter-spacing:-0.8px;color:#000">2</div><div class="t" style="left:117.9px;top:771px;width:200px;text-align:center;font:13.5px/15px 'Liberation Serif',serif;letter-spacing:-0.8px;color:#000">2</div><div class="t" style="left:146.9px;top:771px;width:200px;text-align:center;font:13.5px/15px 'Liberation Serif',serif;letter-spacing:-0.8px;color:#000">0</div><div class="t" style="left:639px;top:536px;font:13px/15px 'Liberation Serif',serif;letter-spacing:0.85px;color:#000">Table 1.4</div><div class="t" style="left:414px;top:552px;font:bold 13.6px/15px 'Liberation Serif',serif;letter-spacing:-0.36px;word-spacing:-0.3px;color:#000">Similarity Matrix (type 2)</div><div style="left:270px;top:568px;width:426px;height:1px;background:#000"></div><div style="left:270px;top:792px;width:426px;height:1px;background:#000"></div><div style="left:270px;top:568px;width:1px;height:225px;background:#000"></div><div style="left:695px;top:568px;width:1px;height:225px;background:#000"></div><div style="left:323px;top:568px;width:1px;height:225px;background:#000"></div><div style="left:270px;top:596px;width:426px;height:1px;background:#000"></div><div style="left:376px;top:568px;width:1px;height:28px;background:#000"></div><div style="left:429px;top:568px;width:1px;height:28px;background:#000"></div><div style="left:482px;top:568px;width:1px;height:28px;background:#000"></div><div style="left:535px;top:568px;width:1px;height:28px;background:#000"></div><div style="left:588px;top:568px;width:1px;height:28px;background:#000"></div><div style="left:642px;top:568px;width:1px;height:28px;background:#000"></div><div style="left:270px;top:624px;width:53px;height:1px;background:#000"></div><div style="left:270px;top:652px;width:53px;height:1px;background:#000"></div><div style="left:270px;top:680px;width:53px;height:1px;background:#000"></div><div style="left:270px;top:708px;width:53px;height:1px;background:#000"></div><div style="left:270px;top:736px;width:53px;height:1px;background:#000"></div><div style="left:270px;top:764px;width:53px;height:1px;background:#000"></div><div class="t" style="left:250.0px;top:574px;width:200px;text-align:center;font:bold italic 16px/18px 'Liberation Serif',serif;color:#000">S</div><div class="t" style="left:197.0px;top:602px;width:200px;text-align:center;font:bold italic 16px/18px 'Liberation Serif',serif;color:#000">S</div><div class="t" style="left:303.0px;top:574px;width:200px;text-align:center;font:bold italic 16px/18px 'Liberation Serif',serif;color:#000">T</div><div class="t" style="left:197.0px;top:630px;width:200px;text-align:center;font:bold italic 16px/18px 'Liberation Serif',serif;color:#000">T</div><div class="t" style="left:356.0px;top:574px;width:200px;text-align:center;font:bold italic 16px/18px 'Liberation Serif',serif;color:#000">U</div><div class="t" style="left:197.0px;top:658px;width:200px;text-align:center;font:bold italic 16px/18px 'Liberation Serif',serif;color:#000">U</div><div class="t" style="left:409.0px;top:574px;width:200px;text-align:center;font:bold italic 16px/18px 'Liberation Serif',serif;color:#000">V</div><div class="t" style="left:197.0px;top:686px;width:200px;text-align:center;font:bold italic 16px/18px 'Liberation Serif',serif;color:#000">V</div><div class="t" style="left:462.0px;top:574px;width:200px;text-align:center;font:bold italic 16px/18px 'Liberation Serif',serif;color:#000">W</div><div class="t" style="left:197.0px;top:714px;width:200px;text-align:center;font:bold italic 16px/18px 'Liberation Serif',serif;color:#000">W</div><div class="t" style="left:515.5px;top:574px;width:200px;text-align:center;font:bold italic 16px/18px 'Liberation Serif',serif;color:#000">X</div><div class="t" style="left:197.0px;top:742px;width:200px;text-align:center;font:bold italic 16px/18px 'Liberation Serif',serif;color:#000">X</div><div class="t" style="left:569.0px;top:574px;width:200px;text-align:center;font:bold italic 16px/18px 'Liberation Serif',serif;color:#000">Y</div><div class="t" style="left:197.0px;top:770px;width:200px;text-align:center;font:bold italic 16px/18px 'Liberation Serif',serif;color:#000">Y</div><div class="t" style="left:248.89999999999998px;top:603px;width:200px;text-align:center;font:13.5px/15px 'Liberation Serif',serif;letter-spacing:-0.8px;color:#000">1</div><div class="t" style="left:301.9px;top:603px;width:200px;text-align:center;font:13.5px/15px 'Liberation Serif',serif;letter-spacing:-0.8px;color:#000">0.9025</div><div class="t" style="left:354.9px;top:603px;width:200px;text-align:center;font:13.5px/15px 'Liberation Serif',serif;letter-spacing:-0.8px;color:#000">0.9025</div><div class="t" style="left:407.9px;top:603px;width:200px;text-align:center;font:13.5px/15px 'Liberation Serif',serif;letter-spacing:-0.8px;color:#000">0.9025</div><div class="t" style="left:460.9px;top:603px;width:200px;text-align:center;font:13.5px/15px 'Liberation Serif',serif;letter-spacing:-0.8px;color:#000">0.9025</div><div class="t" style="left:514.4px;top:603px;width:200px;text-align:center;font:13.5px/15px 'Liberation Serif',serif;letter-spacing:-0.8px;color:#000">0.9025</div><div class="t" style="left:567.9px;top:603px;width:200px;text-align:center;font:13.5px/15px 'Liberation Serif',serif;letter-spacing:-0.8px;color:#000">0.9025</div><div class="t" style="left:248.89999999999998px;top:631px;width:200px;text-align:center;font:13.5px/15px 'Liberation Serif',serif;letter-spacing:-0.8px;color:#000">0.9025</div><div class="t" style="left:301.9px;top:631px;width:200px;text-align:center;font:13.5px/15px 'Liberation Serif',serif;letter-spacing:-0.8px;color:#000">1</div><div class="t" style="left:354.9px;top:631px;width:200px;text-align:center;font:13.5px/15px 'Liberation Serif',serif;letter-spacing:-0.8px;color:#000">0.9025</div><div class="t" style="left:407.9px;top:631px;width:200px;text-align:center;font:13.5px/15px 'Liberation Serif',serif;letter-spacing:-0.8px;color:#000">0.9025</div><div class="t" style="left:460.9px;top:631px;width:200px;text-align:center;font:13.5px/15px 'Liberation Serif',serif;letter-spacing:-0.8px;color:#000">0.9025</div><div class="t" style="left:514.4px;top:631px;width:200px;text-align:center;font:13.5px/15px 'Liberation Serif',serif;letter-spacing:-0.8px;color:#000">0.9025</div><div class="t" style="left:567.9px;top:631px;width:200px;text-align:center;font:13.5px/15px 'Liberation Serif',serif;letter-spacing:-0.8px;color:#000">0.9025</div><div class="t" style="left:248.89999999999998px;top:659px;width:200px;text-align:center;font:13.5px/15px 'Liberation Serif',serif;letter-spacing:-0.8px;color:#000">0.9025</div><div class="t" style="left:301.9px;top:659px;width:200px;text-align:center;font:13.5px/15px 'Liberation Serif',serif;letter-spacing:-0.8px;color:#000">0.9025</div><div class="t" style="left:354.9px;top:659px;width:200px;text-align:center;font:13.5px/15px 'Liberation Serif',serif;letter-spacing:-0.8px;color:#000">1</div><div class="t" style="left:407.9px;top:659px;width:200px;text-align:center;font:13.5px/15px 'Liberation Serif',serif;letter-spacing:-0.8px;color:#000">0.9025</div><div class="t" style="left:460.9px;top:659px;width:200px;text-align:center;font:13.5px/15px 'Liberation Serif',serif;letter-spacing:-0.8px;color:#000">0.9025</div><div class="t" style="left:514.4px;top:659px;width:200px;text-align:center;font:13.5px/15px 'Liberation Serif',serif;letter-spacing:-0.8px;color:#000">0.9025</div><div class="t" style="left:567.9px;top:659px;width:200px;text-align:center;font:13.5px/15px 'Liberation Serif',serif;letter-spacing:-0.8px;color:#000">0.9025</div><div class="t" style="left:248.89999999999998px;top:687px;width:200px;text-align:center;font:13.5px/15px 'Liberation Serif',serif;letter-spacing:-0.8px;color:#000">0.9025</div><div class="t" style="left:301.9px;top:687px;width:200px;text-align:center;font:13.5px/15px 'Liberation Serif',serif;letter-spacing:-0.8px;color:#000">0.9025</div><div class="t" style="left:354.9px;top:687px;width:200px;text-align:center;font:13.5px/15px 'Liberation Serif',serif;letter-spacing:-0.8px;color:#000">0.9025</div><div class="t" style="left:407.9px;top:687px;width:200px;text-align:center;font:13.5px/15px 'Liberation Serif',serif;letter-spacing:-0.8px;color:#000">1</div><div class="t" style="left:460.9px;top:687px;width:200px;text-align:center;font:13.5px/15px 'Liberation Serif',serif;letter-spacing:-0.8px;color:#000">0.9025</div><div class="t" style="left:514.4px;top:687px;width:200px;text-align:center;font:13.5px/15px 'Liberation Serif',serif;letter-spacing:-0.8px;color:#000">0.9025</div><div class="t" style="left:567.9px;top:687px;width:200px;text-align:center;font:13.5px/15px 'Liberation Serif',serif;letter-spacing:-0.8px;color:#000">0.9025</div><div class="t" style="left:248.89999999999998px;top:715px;width:200px;text-align:center;font:13.5px/15px 'Liberation Serif',serif;letter-spacing:-0.8px;color:#000">0.9025</div><div class="t" style="left:301.9px;top:715px;width:200px;text-align:center;font:13.5px/15px 'Liberation Serif',serif;letter-spacing:-0.8px;color:#000">0.9025</div><div class="t" style="left:354.9px;top:715px;width:200px;text-align:center;font:13.5px/15px 'Liberation Serif',serif;letter-spacing:-0.8px;color:#000">0.9025</div><div class="t" style="left:407.9px;top:715px;width:200px;text-align:center;font:13.5px/15px 'Liberation Serif',serif;letter-spacing:-0.8px;color:#000">0.9025</div><div class="t" style="left:460.9px;top:715px;width:200px;text-align:center;font:13.5px/15px 'Liberation Serif',serif;letter-spacing:-0.8px;color:#000">1</div><div class="t" style="left:514.4px;top:715px;width:200px;text-align:center;font:13.5px/15px 'Liberation Serif',serif;letter-spacing:-0.8px;color:#000">0.9025</div><div class="t" style="left:567.9px;top:715px;width:200px;text-align:center;font:13.5px/15px 'Liberation Serif',serif;letter-spacing:-0.8px;color:#000">0.9025</div><div class="t" style="left:248.89999999999998px;top:743px;width:200px;text-align:center;font:13.5px/15px 'Liberation Serif',serif;letter-spacing:-0.8px;color:#000">0.9025</div><div class="t" style="left:301.9px;top:743px;width:200px;text-align:center;font:13.5px/15px 'Liberation Serif',serif;letter-spacing:-0.8px;color:#000">0.9025</div><div class="t" style="left:354.9px;top:743px;width:200px;text-align:center;font:13.5px/15px 'Liberation Serif',serif;letter-spacing:-0.8px;color:#000">0.9025</div><div class="t" style="left:407.9px;top:743px;width:200px;text-align:center;font:13.5px/15px 'Liberation Serif',serif;letter-spacing:-0.8px;color:#000">0.9025</div><div class="t" style="left:460.9px;top:743px;width:200px;text-align:center;font:13.5px/15px 'Liberation Serif',serif;letter-spacing:-0.8px;color:#000">0.9025</div><div class="t" style="left:514.4px;top:743px;width:200px;text-align:center;font:13.5px/15px 'Liberation Serif',serif;letter-spacing:-0.8px;color:#000">1</div><div class="t" style="left:567.9px;top:743px;width:200px;text-align:center;font:13.5px/15px 'Liberation Serif',serif;letter-spacing:-0.8px;color:#000">0.9025</div><div class="t" style="left:248.89999999999998px;top:771px;width:200px;text-align:center;font:13.5px/15px 'Liberation Serif',serif;letter-spacing:-0.8px;color:#000">0.9025</div><div class="t" style="left:301.9px;top:771px;width:200px;text-align:center;font:13.5px/15px 'Liberation Serif',serif;letter-spacing:-0.8px;color:#000">0.9025</div><div class="t" style="left:354.9px;top:771px;width:200px;text-align:center;font:13.5px/15px 'Liberation Serif',serif;letter-spacing:-0.8px;color:#000">0.9025</div><div class="t" style="left:407.9px;top:771px;width:200px;text-align:center;font:13.5px/15px 'Liberation Serif',serif;letter-spacing:-0.8px;color:#000">0.9025</div><div class="t" style="left:460.9px;top:771px;width:200px;text-align:center;font:13.5px/15px 'Liberation Serif',serif;letter-spacing:-0.8px;color:#000">0.9025</div><div class="t" style="left:514.4px;top:771px;width:200px;text-align:center;font:13.5px/15px 'Liberation Serif',serif;letter-spacing:-0.8px;color:#000">0.9025</div><div class="t" style="left:567.9px;top:771px;width:200px;text-align:center;font:13.5px/15px 'Liberation Serif',serif;letter-spacing:-0.8px;color:#000">1</div></div>
<div style="left:4px;top:684px;width:734px;height:17px;background:#ffffff"></div>
<div style="left:4px;top:684px;width:733px;height:16px;background:#808080"></div>
<div style="left:5px;top:685px;width:732px;height:15px;background:#d4d0c8"></div>
<div style="left:724px;top:700px;width:1px;height:1px;background:#fff"></div>
<div style="left:725px;top:699px;width:1px;height:1px;background:#fff"></div>
<div style="left:725px;top:700px;width:1px;height:1px;background:#d4d0c8"></div>
<div style="left:726px;top:698px;width:1px;height:1px;background:#fff"></div>
<div style="left:726px;top:699px;width:1px;height:1px;background:#808080"></div>
<div style="left:726px;top:700px;width:1px;height:1px;background:#d4d0c8"></div>
<div style="left:727px;top:697px;width:1px;height:1px;background:#fff"></div>
<div style="left:727px;top:698px;width:1px;height:1px;background:#808080"></div>
<div style="left:727px;top:699px;width:1px;height:1px;background:#808080"></div>
<div style="left:727px;top:700px;width:1px;height:1px;background:#d4d0c8"></div>
<div style="left:728px;top:696px;width:1px;height:1px;background:#fff"></div>
<div style="left:728px;top:697px;width:1px;height:1px;background:#808080"></div>
<div style="left:728px;top:698px;width:1px;height:1px;background:#808080"></div>
<div style="left:728px;top:699px;width:1px;height:1px;background:#d4d0c8"></div>
<div style="left:728px;top:700px;width:1px;height:1px;background:#d4d0c8"></div>
<div style="left:729px;top:695px;width:1px;height:1px;background:#fff"></div>
<div style="left:729px;top:696px;width:1px;height:1px;background:#808080"></div>
<div style="left:729px;top:697px;width:1px;height:1px;background:#808080"></div>
<div style="left:729px;top:698px;width:1px;height:1px;background:#d4d0c8"></div>
<div style="left:729px;top:699px;width:1px;height:1px;background:#fff"></div>
<div style="left:729px;top:700px;width:1px;height:1px;background:#d4d0c8"></div>
<div style="left:730px;top:694px;width:1px;height:1px;background:#fff"></div>
<div style="left:730px;top:695px;width:1px;height:1px;background:#808080"></div>
<div style="left:730px;top:696px;width:1px;height:1px;background:#808080"></div>
<div style="left:730px;top:697px;width:1px;height:1px;background:#d4d0c8"></div>
<div style="left:730px;top:698px;width:1px;height:1px;background:#fff"></div>
<div style="left:730px;top:699px;width:1px;height:1px;background:#808080"></div>
<div style="left:730px;top:700px;width:1px;height:1px;background:#d4d0c8"></div>
<div style="left:731px;top:693px;width:1px;height:1px;background:#fff"></div>
<div style="left:731px;top:694px;width:1px;height:1px;background:#808080"></div>
<div style="left:731px;top:695px;width:1px;height:1px;background:#808080"></div>
<div style="left:731px;top:696px;width:1px;height:1px;background:#d4d0c8"></div>
<div style="left:731px;top:697px;width:1px;height:1px;background:#fff"></div>
<div style="left:731px;top:698px;width:1px;height:1px;background:#808080"></div>
<div style="left:731px;top:699px;width:1px;height:1px;background:#808080"></div>
<div style="left:731px;top:700px;width:1px;height:1px;background:#d4d0c8"></div>
<div style="left:732px;top:692px;width:1px;height:1px;background:#fff"></div>
<div style="left:732px;top:693px;width:1px;height:1px;background:#808080"></div>
<div style="left:732px;top:694px;width:1px;height:1px;background:#808080"></div>
<div style="left:732px;top:695px;width:1px;height:1px;background:#d4d0c8"></div>
<div style="left:732px;top:696px;width:1px;height:1px;background:#fff"></div>
<div style="left:732px;top:697px;width:1px;height:1px;background:#808080"></div>
<div style="left:732px;top:698px;width:1px;height:1px;background:#808080"></div>
<div style="left:732px;top:699px;width:1px;height:1px;background:#d4d0c8"></div>
<div style="left:732px;top:700px;width:1px;height:1px;background:#d4d0c8"></div>
<div style="left:733px;top:691px;width:1px;height:1px;background:#fff"></div>
<div style="left:733px;top:692px;width:1px;height:1px;background:#808080"></div>
<div style="left:733px;top:693px;width:1px;height:1px;background:#808080"></div>
<div style="left:733px;top:694px;width:1px;height:1px;background:#d4d0c8"></div>
<div style="left:733px;top:695px;width:1px;height:1px;background:#fff"></div>
<div style="left:733px;top:696px;width:1px;height:1px;background:#808080"></div>
<div style="left:733px;top:697px;width:1px;height:1px;background:#808080"></div>
<div style="left:733px;top:698px;width:1px;height:1px;background:#d4d0c8"></div>
<div style="left:733px;top:699px;width:1px;height:1px;background:#fff"></div>
<div style="left:733px;top:700px;width:1px;height:1px;background:#d4d0c8"></div>
<div style="left:734px;top:690px;width:1px;height:1px;background:#fff"></div>
<div style="left:734px;top:691px;width:1px;height:1px;background:#808080"></div>
<div style="left:734px;top:692px;width:1px;height:1px;background:#808080"></div>
<div style="left:734px;top:693px;width:1px;height:1px;background:#d4d0c8"></div>
<div style="left:734px;top:694px;width:1px;height:1px;background:#fff"></div>
<div style="left:734px;top:695px;width:1px;height:1px;background:#808080"></div>
<div style="left:734px;top:696px;width:1px;height:1px;background:#808080"></div>
<div style="left:734px;top:697px;width:1px;height:1px;background:#d4d0c8"></div>
<div style="left:734px;top:698px;width:1px;height:1px;background:#fff"></div>
<div style="left:734px;top:699px;width:1px;height:1px;background:#808080"></div>
<div style="left:734px;top:700px;width:1px;height:1px;background:#d4d0c8"></div>
<div style="left:735px;top:689px;width:1px;height:1px;background:#fff"></div>
<div style="left:735px;top:690px;width:1px;height:1px;background:#808080"></div>
<div style="left:735px;top:691px;width:1px;height:1px;background:#808080"></div>
<div style="left:735px;top:692px;width:1px;height:1px;background:#d4d0c8"></div>
<div style="left:735px;top:693px;width:1px;height:1px;background:#fff"></div>
<div style="left:735px;top:694px;width:1px;height:1px;background:#808080"></div>
<div style="left:735px;top:695px;width:1px;height:1px;background:#808080"></div>
<div style="left:735px;top:696px;width:1px;height:1px;background:#d4d0c8"></div>
<div style="left:735px;top:697px;width:1px;height:1px;background:#fff"></div>
<div style="left:735px;top:698px;width:1px;height:1px;background:#808080"></div>
<div style="left:735px;top:699px;width:1px;height:1px;background:#808080"></div>
<div style="left:735px;top:700px;width:1px;height:1px;background:#d4d0c8"></div>
<div style="left:736px;top:688px;width:1px;height:1px;background:#fff"></div>
<div style="left:736px;top:689px;width:1px;height:1px;background:#808080"></div>
<div style="left:736px;top:690px;width:1px;height:1px;background:#808080"></div>
<div style="left:736px;top:691px;width:1px;height:1px;background:#d4d0c8"></div>
<div style="left:736px;top:692px;width:1px;height:1px;background:#fff"></div>
<div style="left:736px;top:693px;width:1px;height:1px;background:#808080"></div>
<div style="left:736px;top:694px;width:1px;height:1px;background:#808080"></div>
<div style="left:736px;top:695px;width:1px;height:1px;background:#d4d0c8"></div>
<div style="left:736px;top:696px;width:1px;height:1px;background:#fff"></div>
<div style="left:736px;top:697px;width:1px;height:1px;background:#808080"></div>
<div style="left:736px;top:698px;width:1px;height:1px;background:#808080"></div>
<div style="left:736px;top:699px;width:1px;height:1px;background:#d4d0c8"></div>
<div style="left:736px;top:700px;width:1px;height:1px;background:#d4d0c8"></div>
<div style="left:737px;top:687px;width:1px;height:1px;background:#fff"></div>
<div style="left:737px;top:688px;width:1px;height:1px;background:#d4d0c8"></div>
<div style="left:737px;top:689px;width:1px;height:1px;background:#d4d0c8"></div>
<div style="left:737px;top:690px;width:1px;height:1px;background:#d4d0c8"></div>
<div style="left:737px;top:691px;width:1px;height:1px;background:#d4d0c8"></div>
<div style="left:737px;top:692px;width:1px;height:1px;background:#d4d0c8"></div>
<div style="left:737px;top:693px;width:1px;height:1px;background:#d4d0c8"></div>
<div style="left:737px;top:694px;width:1px;height:1px;background:#d4d0c8"></div>
<div style="left:737px;top:695px;width:1px;height:1px;background:#d4d0c8"></div>
<div style="left:737px;top:696px;width:1px;height:1px;background:#d4d0c8"></div>
<div style="left:737px;top:697px;width:1px;height:1px;background:#d4d0c8"></div>
<div style="left:737px;top:698px;width:1px;height:1px;background:#d4d0c8"></div>
<div style="left:737px;top:699px;width:1px;height:1px;background:#d4d0c8"></div>
<div style="left:737px;top:700px;width:1px;height:1px;background:#d4d0c8"></div>
</body></html>
